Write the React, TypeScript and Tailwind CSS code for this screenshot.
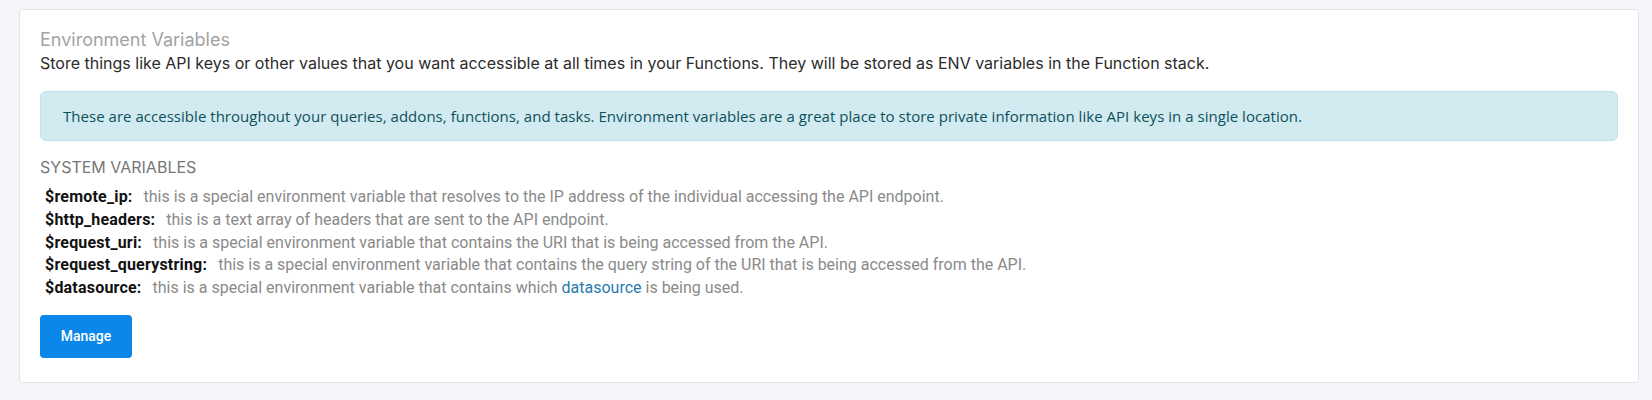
import React from "react";

const rows: { k: string; v: React.ReactNode }[] = [
  { k: "$remote_ip:", v: "this is a special environment variable that resolves to the IP address of the individual accessing the API endpoint." },
  { k: "$http_headers:", v: "this is a text array of headers that are sent to the API endpoint." },
  { k: "$request_uri:", v: "this is a special environment variable that contains the URI that is being accessed from the API." },
  { k: "$request_querystring:", v: "this is a special environment variable that contains the query string of the URI that is being accessed from the API." },
  {
    k: "$datasource:",
    v: (
      <>
        this is a special environment variable that contains which <a className="text-[#2a7ab0]">datasource</a> is being used.
      </>
    ),
  },
];

export default function App() {
  return (
    <div className="w-[1652px] h-[400px] bg-[#f5f6fa] pt-[9px] pl-[19px] pr-[13px] font-['Inter',sans-serif]">
      <div className="h-[374px] bg-white border border-[#e3e5e9] rounded-[3px] pl-[20px] pr-[20px] pt-[18px]">
        <div className="text-[18px] leading-[24px] text-[#a3a3a3]">Environment Variables</div>
        <div className="text-[16px] leading-[22px] text-[#2b2b2b]">
          Store things like API keys or other values that you want accessible at all times in your Functions. They will be stored as ENV variables in the Function stack.
        </div>
        <div className="mt-[17px] h-[50px] flex items-center bg-[#d1ebf0] border border-[#bfe3ea] rounded-[6px] px-[22px] text-[15px] tracking-[0.03px] text-[#0f4f5c] font-['Open_Sans',sans-serif]">
          These are accessible throughout your queries, addons, functions, and tasks. Environment variables are a great place to store private information like API keys in a single location.
        </div>
        <div className="mt-[15px] text-[16px] leading-[22px] text-[#777777] uppercase">System Variables</div>
        <div className="mt-[8px] pl-[5px] font-['Roboto',sans-serif] text-[16px] leading-[22.75px]">
          {rows.map((r) => (
            <div key={r.k} className="flex">
              <span className="font-bold text-[#111111] tracking-[0.2px]">{r.k}</span>
              <span className="ml-[11px] text-[#8a8a8a]">{r.v}</span>
            </div>
          ))}
        </div>
        <button className="mt-[15px] w-[92px] h-[43px] rounded-[4px] bg-[#0a87e8] text-white text-[14px] font-['Roboto',sans-serif] font-medium">
          Manage
        </button>
      </div>
    </div>
  );
}
